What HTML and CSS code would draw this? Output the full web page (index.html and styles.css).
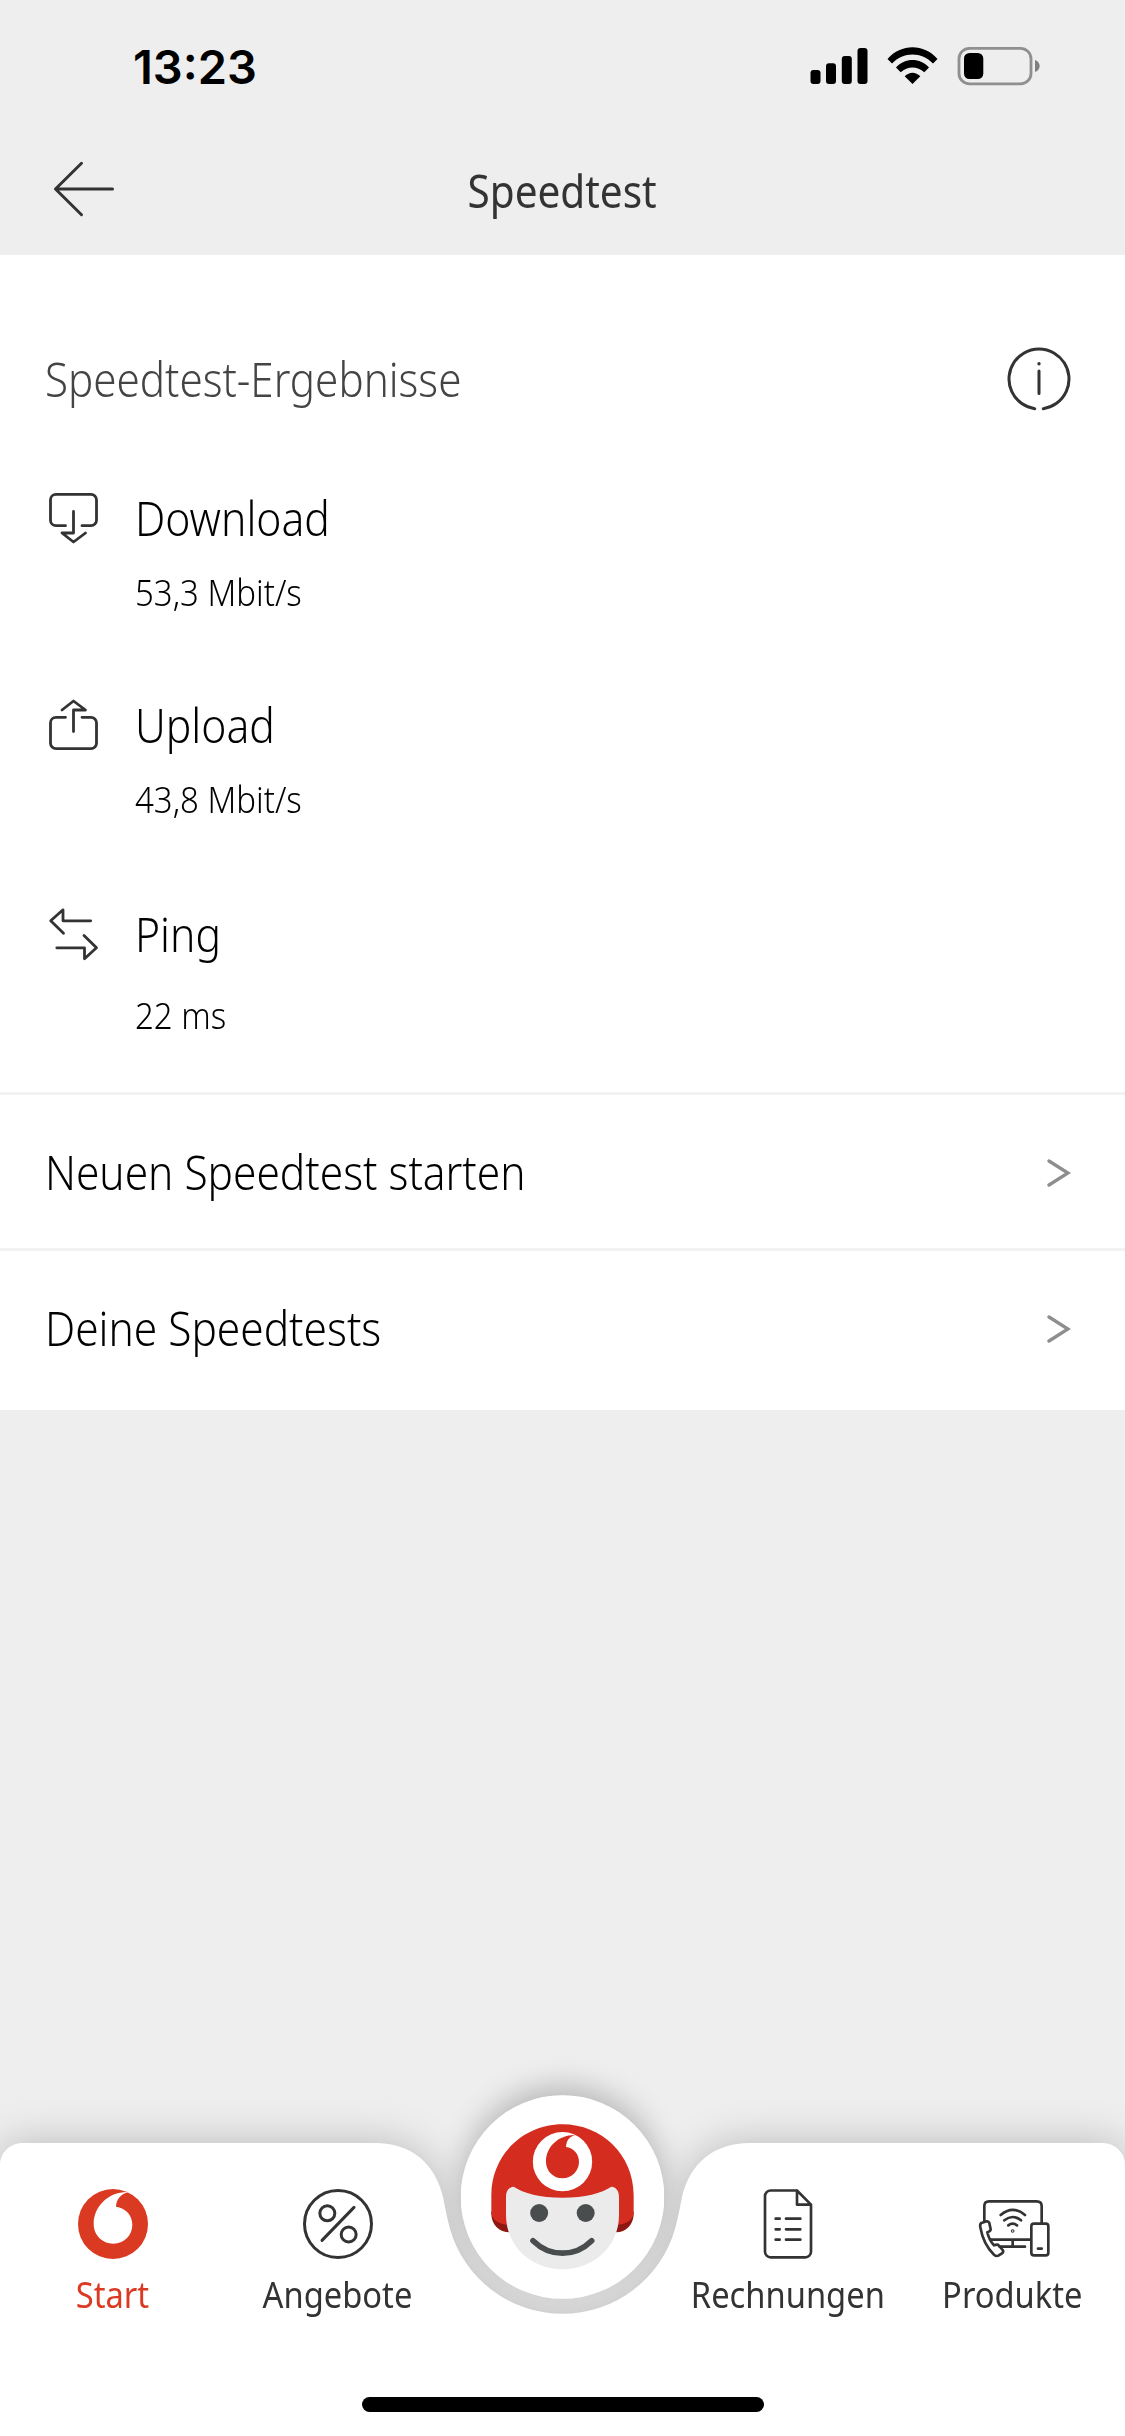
FILE: index.html
```html
<!DOCTYPE html>
<html lang="de">
<head>
<meta charset="utf-8">
<title>Speedtest</title>
<link rel="stylesheet" href="styles.css">
</head>
<body>
<div class="app">
  <header class="top">
    <div class="status">
      <span class="clock">13:23</span>
      <svg class="status-icons" viewBox="810 46 231 40" aria-hidden="true">
        <rect x="810.5" y="70" width="10" height="14" rx="3"/>
        <rect x="826" y="63.3" width="10" height="20.7" rx="3"/>
        <rect x="841.8" y="56" width="10" height="28" rx="3"/>
        <rect x="857.5" y="48" width="10" height="36" rx="3"/>
        <path d="M887.5 59C901 43.300 924 43.300 937.500 59L933 63.500C921.500 51.500 903.500 51.500 892 63.500Z"/>
        <path d="M896 67.600C904.500 57.500 920.500 57.500 929 67.600L924.300 72.300C917.500 65.800 907.500 65.800 900.700 72.300Z"/>
        <path d="M904.700 76.300C909.500 71.500 915.500 71.500 920.300 76.300L912.500 84Z"/>
        <rect x="959" y="48.300" width="72" height="35.600" rx="10.500" fill="none" stroke="#8f8f8f" stroke-width="2.800"/>
        <rect x="964" y="53" width="19.300" height="26" rx="5.500"/>
        <path d="M1035 60C1041.200 62 1041.200 70 1035 72Z" fill="#7f7f7f"/>
      </svg>
    </div>
    <div class="titlebar">
      <svg class="back" viewBox="52 160 64 58" aria-hidden="true"><path d="M81.500 163.300L55.500 189L81.500 214.700M55.500 189H112.500"/></svg>
      <h1 class="title">Speedtest</h1>
    </div>
  </header>

  <main class="card">
    <div class="card-head">
      <h2 class="heading">Speedtest-Ergebnisse</h2>
      <svg class="info" viewBox="1007 347 64 64" aria-hidden="true">
        <path d="M1034.700 408.700A30 30 0 1 1 1043.300 408.700M1039 371V393.500"/>
        <circle class="dot" cx="1039" cy="363.800" r="1.700"/>
      </svg>
    </div>
    <section class="metric">
      <svg class="metric-icon" viewBox="48 491 52 54" aria-hidden="true"><path d="M65.500 525.700H56A5.500 5.500 0 0 1 50.500 520.200V499.800A5.500 5.500 0 0 1 56 494.300H91A5.500 5.500 0 0 1 96.500 499.800V520.200A5.500 5.500 0 0 1 91 525.700H82M73.500 511.500V533H62L73.500 542L85.500 533"/></svg>
      <div class="metric-text"><h3 class="metric-name">Download</h3><p class="metric-value">53,3 Mbit/s</p></div>
    </section>
    <section class="metric">
      <svg class="metric-icon" viewBox="48 697 52 54" aria-hidden="true"><path d="M65.500 716.300H56A5.500 5.500 0 0 0 50.500 721.800V742.200A5.500 5.500 0 0 0 56 747.700H91A5.500 5.500 0 0 0 96.500 742.200V721.800A5.500 5.500 0 0 0 91 716.300H82M73.500 730.500V709H85.500L73.500 700L62 709"/></svg>
      <div class="metric-text"><h3 class="metric-name">Upload</h3><p class="metric-value">43,8 Mbit/s</p></div>
    </section>
    <section class="metric metric-ping">
      <svg class="metric-icon" viewBox="48 907 52 54" aria-hidden="true"><path d="M90.700 920.800H63V909.800L50.700 920.800L63.500 933.200M56.800 947.800H84.500V958.800L96.500 947.800L84 935.400"/></svg>
      <div class="metric-text"><h3 class="metric-name">Ping</h3><p class="metric-value">22 ms</p></div>
    </section>
    <div class="link-row">
      <span class="link-text">Neuen Speedtest starten</span>
      <svg class="chevron" viewBox="0 0 24 28" aria-hidden="true"><path d="M2 2L21 14L2 26"/></svg>
    </div>
    <div class="link-row">
      <span class="link-text">Deine Speedtests</span>
      <svg class="chevron" viewBox="0 0 24 28" aria-hidden="true"><path d="M2 2L21 14L2 26"/></svg>
    </div>
  </main>

  <nav class="tabs">
    <svg class="tabs-shape" viewBox="0 2043 1125 393" aria-hidden="true">
      <circle class="button-glow" cx="562.500" cy="2197" r="101.500"/>
      <path class="bar" d="M0 2436V2165A22 22 0 0 1 22 2143H375C411 2143 435 2163 443 2197C445 2207 447 2218 450 2229A117 117 0 0 0 675 2229C678 2218 680 2207 682 2197C690 2163 714 2143 750 2143H1103A22 22 0 0 1 1125 2165V2436Z"/>
    </svg>
    <div class="tab active">
      <svg class="tab-icon" viewBox="228 384 219 216" aria-hidden="true">
        <circle cx="339" cy="492" r="105" fill="#db3a22"/>
        <path fill="#fff" d="M385 396C325 394 281 440 281 492C281 525 307 551 340 551C372 551 397 526 397 494C397 464 376 444 348 440C349 418 363 402 385 396Z"/>
      </svg>
      <span class="tab-label">Start</span>
    </div>
    <div class="tab">
      <svg class="tab-icon line" viewBox="903 384 219 216" aria-hidden="true">
        <circle cx="1014" cy="492" r="100.500"/><circle cx="982" cy="460" r="22.500"/><circle cx="1046" cy="523.500" r="22.500"/><path d="M966 541L1062 442"/>
      </svg>
      <span class="tab-label">Angebote</span>
    </div>
    <div class="helper">
      <svg class="face" viewBox="183 105 609 612" aria-hidden="true">
        <circle cx="487.500" cy="411" r="305.500" fill="#fff"/>
        <path fill="#8f1712" d="M274 455C272 492 295 516 330 517V450ZM701 455C703 492 680 516 648 517V450Z"/>
        <path fill="#d42d20" d="M274 405C274 285 370 193 487.500 193C605 193 701 285 701 405V462C696 480 679 493 650 495L620 420H355L325 495C296 493 280 480 274 462Z"/>
        <path fill="#ebebeb" d="M318 410C318 392 327 381 341 380C370 399 420 413 487.500 413C555 413 605 399 634 380C648 381 657 392 657 410V465C657 560 580 628 487.500 628C395 628 318 560 318 465Z"/>
        <circle cx="487.500" cy="305" r="89" fill="#fff"/>
        <path fill="#d42d20" d="M526 225C475 224 438 261 438 305C438 333 460 355 488 355C515 355 537 333 537 306C537 281 520 264 498 261C499 242 508 230 526 225Z"/>
        <circle cx="417.500" cy="459" r="27" fill="#4a4d4e"/><circle cx="557" cy="459" r="27" fill="#4a4d4e"/>
        <path d="M399 542C450 592 525 592 575 542" fill="none" stroke="#4a4d4e" stroke-width="17" stroke-linecap="round"/>
      </svg>
    </div>
    <div class="tab">
      <svg class="tab-icon line thin" viewBox="228 384 219 216" aria-hidden="true">
        <path d="M366 391.500H287A17 17 0 0 0 270 408.500V575A17 17 0 0 0 287 592H391A17 17 0 0 0 408 575V434L366 391.500V434H408M302 476H314M333 476H376M302 508H314M333 508H376M302 539H314M333 539H376"/>
      </svg>
      <span class="tab-label">Rechnungen</span>
    </div>
    <div class="tab">
      <svg class="tab-icon line thin" viewBox="903 384 219 216" aria-hidden="true">
        <path d="M928 484V438Q928 424 942 424H1085Q1100 424 1100 438V488M948 539H1066M1013 540V560M974 560H1050"/>
        <rect x="1069" y="491" width="51" height="95" rx="8"/><path d="M1089 566H1100"/>
        <path d="M977 465Q1013 434 1050 465M988 481Q1013 461 1038 481M1000 496Q1013 486 1026 496"/>
        <circle cx="1013" cy="513" r="1.500"/>
        <path d="M919 489L935 484Q941 483 943 489L947 508Q947 514 937 517Q942 540 957 556Q968 552 971 556L983 570Q987 576 981 580L970 587Q964 590 957 584Q925 554 916 502Q914 492 919 489Z"/>
      </svg>
      <span class="tab-label">Produkte</span>
    </div>
    <div class="home-indicator"></div>
  </nav>
</div>
</body>
</html>
```
FILE: styles.css
```css
* { box-sizing: border-box; }
body { margin: 0; background: #eee; }
h1, h2, h3, p { margin: 0; font-weight: inherit; }
.app {
  display: flex;
  flex-direction: column;
  width: 1125px;
  height: 2436px;
  overflow: hidden;
  background: #eee;
  font-family: "Noto Sans", "Open Sans", sans-serif;
  font-weight: 300;
  white-space: nowrap;
}
.title, .heading, .metric-name, .metric-value, .link-text { transform: scaleX(.9); transform-origin: 0 50%; }
.top { height: 255px; }
.status {
  display: flex;
  justify-content: space-between;
  padding: 39px 84px 0 133px;
  height: 135px;
}
.clock { font: 600 47px/56px Inter, sans-serif; color: #000; }
.status-icons { width: 231px; height: 40px; margin-top: 7px; }
.titlebar {
  display: grid;
  grid-template-columns: 1fr auto 1fr;
  height: 120px;
  padding: 25px 52px 0;
}
.back { width: 64px; height: 58px; fill: none; stroke: #333; stroke-width: 3; stroke-linecap: round; stroke-linejoin: round; }
.title { color: #333; font-size: 45px; line-height: 62px; font-weight: 400; transform-origin: 50% 50%; }

.card { display: flex; flex-direction: column; height: 1155px; background: #fff; }
.card-head {
  display: flex;
  justify-content: space-between;
  align-items: flex-start;
  height: 213px;
  padding: 92px 54px 0 45px;
}
.heading { font-size: 47px; line-height: 64px; color: #444; transform: scaleX(.897); }
.info { width: 64px; height: 64px; fill: none; stroke: #333; stroke-width: 3; stroke-linecap: round; }
.info .dot { fill: #333; stroke: none; }
.metric { display: flex; gap: 35px; height: 207px; padding: 23px 48px 0; }
.metric-icon { width: 52px; height: 54px; fill: none; stroke: #333; stroke-width: 2.800; stroke-linecap: round; stroke-linejoin: round; }
.metric-text { margin-top: -5px; }
.metric-name { font-size: 47px; line-height: 64px; color: #000; transform: scaleX(.907); }
.metric-value { margin-top: 18px; font-size: 36px; line-height: 50px; color: #000; transform: scaleX(.916); }
.metric-ping { height: 210px; padding-top: 25px; }
.metric-ping .metric-value { margin-top: 25px; }
.link-row {
  display: flex;
  justify-content: space-between;
  align-items: center;
  height: 156px;
  padding: 3px 54px 0 45px;
  border-top: 3px solid #f2f2f2;
}
.link-text { margin-bottom: 3px; font-size: 47px; line-height: 64px; color: #000; transform: scaleX(.903); }
.chevron { width: 24px; height: 28px; fill: none; stroke: #8e8e8e; stroke-width: 3.300; stroke-linecap: round; stroke-linejoin: miter; }

.tabs {
  position: relative;
  display: grid;
  grid-template-columns: repeat(5, 225px);
  grid-template-rows: 254px 39px;
  margin-top: auto;
  height: 293px;
}
.tabs-shape { position: absolute; left: 0; bottom: 0; width: 1125px; height: 393px; overflow: visible; }
.bar { fill: #fff; filter: drop-shadow(0 0 20px rgba(0, 0, 0, .22)); }
.button-glow { fill: #eee; filter: drop-shadow(0 -10px 14px rgba(0, 0, 0, .22)); }
.tab { position: relative; display: flex; flex-direction: column; align-items: center; padding-top: 45px; }
.tab-icon { width: 73px; height: 72px; overflow: visible; }
.line { fill: none; stroke: #333; stroke-width: 9; stroke-linecap: round; stroke-linejoin: round; }
.thin { stroke-width: 8; }
.tab-label { margin-top: 10px; font-size: 36px; line-height: 50px; font-weight: 400; color: #333; transform: scaleX(.908); }
.active .tab-label { color: #db3a22; }
.helper { position: relative; display: flex; justify-content: center; margin-top: -48px; }
.face { width: 203px; height: 204px; }
.home-indicator { position: relative; grid-column: 1 / -1; justify-self: center; width: 402px; height: 15px; border-radius: 8px; background: #000; }
```
